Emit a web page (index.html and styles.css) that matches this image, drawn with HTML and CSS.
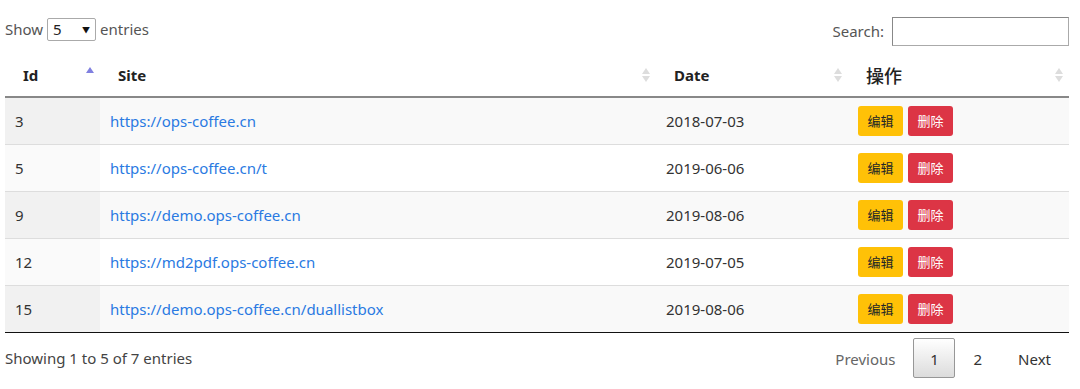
FILE: index.html
```html
<!DOCTYPE html>
<html lang="en">
<head>
    <meta charset="UTF-8">
    <title>Sites</title>
    <link rel="stylesheet" href="styles.css">
</head>
<body>
    <div class="wrapper">
        <div class="top">
            <label class="length">Show
                <span class="select">5<span class="caret">&#9660;</span></span>
                entries</label>
            <label class="filter">Search: <span class="search"></span></label>
        </div>

        <table class="data">
            <colgroup>
                <col class="c-id">
                <col class="c-site">
                <col class="c-date">
                <col class="c-op">
            </colgroup>
            <thead>
                <tr>
                    <th class="sorting-asc">Id</th>
                    <th class="sorting">Site</th>
                    <th class="sorting">Date</th>
                    <th class="sorting cjk">操作</th>
                </tr>
            </thead>
            <tbody>
                <tr class="odd">
                    <td class="sorted">3</td>
                    <td><a href="#">https://ops-coffee.cn</a></td>
                    <td>2018-07-03</td>
                    <td><span class="btn edit">编辑</span><span class="btn del">删除</span></td>
                </tr>
                <tr class="even">
                    <td class="sorted">5</td>
                    <td><a href="#">https://ops-coffee.cn/t</a></td>
                    <td>2019-06-06</td>
                    <td><span class="btn edit">编辑</span><span class="btn del">删除</span></td>
                </tr>
                <tr class="odd">
                    <td class="sorted">9</td>
                    <td><a href="#">https://demo.ops-coffee.cn</a></td>
                    <td>2019-08-06</td>
                    <td><span class="btn edit">编辑</span><span class="btn del">删除</span></td>
                </tr>
                <tr class="even">
                    <td class="sorted">12</td>
                    <td><a href="#">https://md2pdf.ops-coffee.cn</a></td>
                    <td>2019-07-05</td>
                    <td><span class="btn edit">编辑</span><span class="btn del">删除</span></td>
                </tr>
                <tr class="odd">
                    <td class="sorted">15</td>
                    <td><a href="#">https://demo.ops-coffee.cn/duallistbox</a></td>
                    <td>2019-08-06</td>
                    <td><span class="btn edit">编辑</span><span class="btn del">删除</span></td>
                </tr>
            </tbody>
        </table>

        <div class="bottom">
            <div class="info">Showing 1 to 5 of 7 entries</div>
            <div class="paging">
                <span class="page disabled">Previous</span>
                <span class="page current">1</span>
                <span class="page">2</span>
                <span class="page">Next</span>
            </div>
        </div>
    </div>
</body>
</html>
```

FILE: styles.css
```css
body {
    margin: 0;
    font-family: "Segoe UI", "Noto Sans", "Noto Sans CJK SC", sans-serif;
    font-size: 15px;
    color: #333;
    background: #fff;
}
.wrapper {
    width: 1064px;
    margin-left: 5px;
}
.top {
    display: flex;
    justify-content: space-between;
    align-items: center;
    height: 53px;
    padding-top: 5px;
    box-sizing: border-box;
}
.length {
    display: flex;
    align-items: center;
    gap: 4px;
    color: #555;
}
.select {
    display: inline-flex;
    justify-content: space-between;
    align-items: center;
    width: 49px;
    height: 23px;
    box-sizing: border-box;
    border: 1px solid #aaa;
    border-radius: 2px;
    padding: 0 5px 0 5px;
    color: #222;
}
.caret {
    font-size: 8px;
    color: #111;
}
.filter {
    display: flex;
    align-items: center;
    gap: 8px;
    color: #555;
    margin-top: 4px;
}
.search {
    display: inline-block;
    width: 177px;
    height: 29px;
    box-sizing: border-box;
    border: 1px solid #aaa;
    border-top-color: #888;
    border-left-color: #888;
}
.data {
    width: 100%;
    border-collapse: collapse;
    table-layout: fixed;
}
.c-id { width: 95px; }
.c-site { width: 556px; }
.c-date { width: 192px; }
.c-op { width: 221px; }
th {
    position: relative;
    text-align: left;
    font-weight: bold;
    color: #222;
    padding: 0 18px;
    height: 43px;
    border-bottom: 2px solid #888;
}
th.cjk {
    font-family: "Noto Sans CJK SC", sans-serif;
    font-weight: 500;
    font-size: 18px;
}
th::before,
th::after {
    content: "";
    position: absolute;
    right: 6px;
    border-left: 4px solid transparent;
    border-right: 4px solid transparent;
}
th.sorting::before {
    top: 15px;
    border-bottom: 6px solid #ddd;
}
th.sorting::after {
    top: 23px;
    border-top: 6px solid #ddd;
}
th.sorting-asc::before {
    top: 14px;
    border-bottom: 6px solid #8080e0;
}
td {
    height: 47px;
    box-sizing: border-box;
    padding: 0 10px;
    border-top: 1px solid #ddd;
    color: #333;
}
tbody tr:first-child td {
    border-top: none;
}
tbody tr:last-child td {
    border-bottom: 1px solid #111;
}
tr.odd td {
    background: #f9f9f9;
}
tr.odd td.sorted {
    background: #f1f1f1;
}
tr.even td.sorted {
    background: #fafafa;
}
a {
    color: #2a7ae2;
    text-decoration: none;
}
.btn {
    display: inline-block;
    width: 45px;
    height: 30px;
    line-height: 30px;
    text-align: center;
    font-size: 13px;
    border-radius: 3px;
    margin-right: 5px;
    vertical-align: middle;
}
.edit {
    background: #ffc107;
    color: #212529;
}
.del {
    background: #dc3545;
    color: #fff;
}
.bottom {
    display: flex;
    justify-content: space-between;
    align-items: center;
    padding-top: 5px;
}
.info {
    color: #444;
}
.paging {
    display: flex;
    align-items: center;
    gap: 0;
}
.page {
    display: inline-block;
    padding: 0 17px;
    height: 40px;
    line-height: 40px;
    color: #333;
    border: 1px solid transparent;
    border-radius: 2px;
    box-sizing: border-box;
}
.page.disabled {
    color: #666;
}
.page.current {
    width: 42px;
    padding: 0;
    text-align: center;
    border-color: #979797;
    background: linear-gradient(#fff, #dcdcdc);
}
```
